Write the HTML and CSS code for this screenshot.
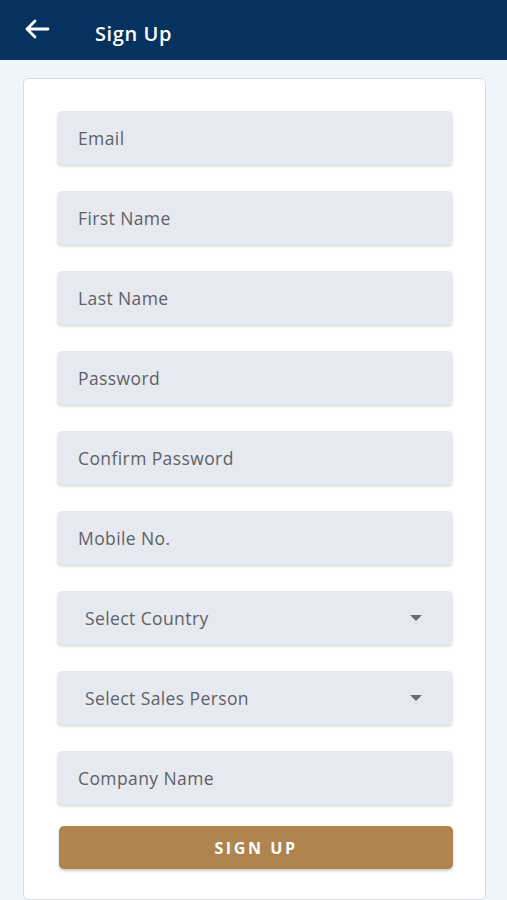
FILE: index.html
```html
<!DOCTYPE html>
<html lang="en">

<head>
    <meta charset="UTF-8">
    <meta name="viewport" content="width=device-width, initial-scale=1.0">
    <title>Sign Up</title>
    <link rel="stylesheet" href="styles.css">
</head>

<body>

    <div class="header">
        <svg class="back" width="26" height="20" viewBox="0 0 26 20">
            <path d="M24 10H3M11 2L3 10l8 8" fill="none" stroke="#fff" stroke-width="2.8" stroke-linecap="round" stroke-linejoin="round" />
        </svg>
        <h1 class="title">Sign Up</h1>
    </div>

    <div class="page">
        <div class="card">
            <div class="field">Email</div>
            <div class="field">First Name</div>
            <div class="field">Last Name</div>
            <div class="field">Password</div>
            <div class="field">Confirm Password</div>
            <div class="field">Mobile No.</div>
            <div class="field select">
                <span>Select Country</span>
                <span class="caret"></span>
            </div>
            <div class="field select">
                <span>Select Sales Person</span>
                <span class="caret"></span>
            </div>
            <div class="field">Company Name</div>
            <button class="signup">SIGN UP</button>
        </div>
    </div>

</body>

</html>
```

FILE: styles.css
```css
* {
    box-sizing: border-box;
    padding: 0;
    margin: 0;
    font-family: 'Open Sans', 'Noto Sans', sans-serif;
}

body {
    width: 507px;
    height: 900px;
    overflow: hidden;
    background-color: #eef5fc;
}

.header {
    height: 60px;
    background-color: #06325f;
    display: flex;
    align-items: center;
    padding-left: 24px;
}

.back {
    margin-top: -2px;
}

.title {
    color: #fff;
    font-size: 20px;
    font-weight: 600;
    letter-spacing: 0.6px;
    margin-left: 45px;
    margin-top: 6px;
}

.page {
    padding: 18px 21px 0 23px;
}

.card {
    background-color: #fff;
    border: 1px solid #d6dce4;
    border-radius: 5px;
    padding: 32px 32px 27px 33px;
    display: flex;
    flex-direction: column;
    gap: 26px;
    height: 822px;
}

.field {
    height: 54px;
    background-color: #e6e9ef;
    border-radius: 5px;
    box-shadow: 0 2px 2px rgba(0, 0, 0, 0.12);
    display: flex;
    align-items: center;
    padding-left: 21px;
    font-size: 17.5px;
    color: #5f6167;
    letter-spacing: 0.4px;
}

.select {
    padding-left: 28px;
    padding-right: 31px;
    justify-content: space-between;
}

.caret {
    width: 0;
    height: 0;
    border-left: 6px solid transparent;
    border-right: 6px solid transparent;
    border-top: 6px solid #6b6d72;
}

.signup {
    margin-top: -5px;
    margin-left: 2px;
    height: 43px;
    border: none;
    border-radius: 5px;
    background-color: #b0844f;
    color: #fff;
    font-size: 16px;
    font-weight: 700;
    letter-spacing: 2.6px;
    box-shadow: 0 2px 3px rgba(0, 0, 0, 0.2);
}
```
